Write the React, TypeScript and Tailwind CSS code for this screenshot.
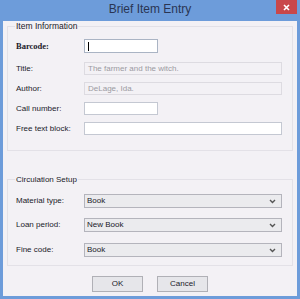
import React from "react";

const font = { fontFamily: '"Liberation Sans", Arial, sans-serif' };

function Chevron() {
  return (
    <svg width="7" height="5" viewBox="0 0 7 5" className="mr-[5px]">
      <path d="M1 1 L3.5 3.5 L6 1" stroke="#555" strokeWidth="1.4" fill="none" />
    </svg>
  );
}

export default function App() {
  return (
    <div className="w-[300px] h-[299px] bg-[#6d9cda] flex flex-col" style={font}>
      <div className="h-[21px] relative flex items-center justify-center">
        <span className="text-[12px] text-[#2a3553] -mt-[4px]">Brief Item Entry</span>
        <div className="absolute right-[3px] top-0 w-[21px] h-[14px] bg-[#c9474a] flex items-center justify-center">
          <svg width="7" height="7" viewBox="0 0 7 7">
            <path d="M1 1 L6 6 M6 1 L1 6" stroke="#ffffff" strokeWidth="1.6" />
          </svg>
        </div>
      </div>
      <div className="mx-[3px] mb-[3px] flex-1 bg-[#f3f1f5] flex flex-col px-[4px]">
        {/* Group 1 */}
        <div className="relative mt-[5px] h-[125px] border border-[#e3e1e7] pt-[12px] text-[8px] text-[#1a1a2a]">
          <span className="absolute -top-[5px] left-[7px] bg-[#f3f1f5] px-[1px] leading-[9px] text-[8.5px]">Item Information</span>
          <div className="flex items-center">
            <div className="w-[76px] pl-[8px] font-bold text-[8.5px]" style={{ fontFamily: '"Liberation Serif", serif' }}>Barcode:</div>
            <div className="w-[74px] h-[14px] border border-[#aab4c4] bg-white flex items-center pl-[3px]">
              <div className="w-px h-[9px] bg-black" />
            </div>
          </div>
          <div className="flex items-center mt-[9px]">
            <div className="w-[76px] pl-[8px]">Title:</div>
            <div className="w-[198px] h-[13px] border border-[#dddbe1] flex items-center pl-[3px] text-[#9b9aa2]">The farmer and the witch.</div>
          </div>
          <div className="flex items-center mt-[7px]">
            <div className="w-[76px] pl-[8px]">Author:</div>
            <div className="w-[198px] h-[13px] border border-[#dddbe1] flex items-center pl-[3px] text-[#9b9aa2]">DeLage, Ida.</div>
          </div>
          <div className="flex items-center mt-[7px]">
            <div className="w-[76px] pl-[8px]">Call number:</div>
            <div className="w-[74px] h-[13px] border border-[#c4c8d2] bg-white" />
          </div>
          <div className="flex items-center mt-[7px]">
            <div className="w-[76px] pl-[8px]">Free text block:</div>
            <div className="w-[198px] h-[13px] border border-[#c4c8d2] bg-white" />
          </div>
        </div>
        {/* Group 2 */}
        <div className="relative mt-[28px] h-[87px] border border-[#e3e1e7] pt-[14px] text-[8px] text-[#1a1a2a]">
          <span className="absolute -top-[5px] left-[7px] bg-[#f3f1f5] px-[1px] leading-[9px] text-[8px]">Circulation Setup</span>
          {[
            ["Material type:", "Book", ""],
            ["Loan period:", "New Book", "mt-[10px]"],
            ["Fine code:", "Book", "mt-[11px]"],
          ].map(([label, val, mt]) => (
            <div key={label + val} className={`flex items-center ${mt}`}>
              <div className="w-[76px] pl-[8px]">{label}</div>
              <div className="w-[198px] h-[14px] border border-[#b4b4bc] bg-[#ebebee] flex items-center justify-between">
                <span className="pl-[2px]">{val}</span>
                <Chevron />
              </div>
            </div>
          ))}
        </div>
        <div className="flex justify-center gap-[14px] mt-[10px] text-[8px] text-[#1a1a2a]">
          <div className="w-[51px] h-[16px] border border-[#b0b0b6] bg-[#e6e6ea] flex items-center justify-center">OK</div>
          <div className="w-[51px] h-[16px] border border-[#b0b0b6] bg-[#e6e6ea] flex items-center justify-center">Cancel</div>
        </div>
      </div>
    </div>
  );
}
